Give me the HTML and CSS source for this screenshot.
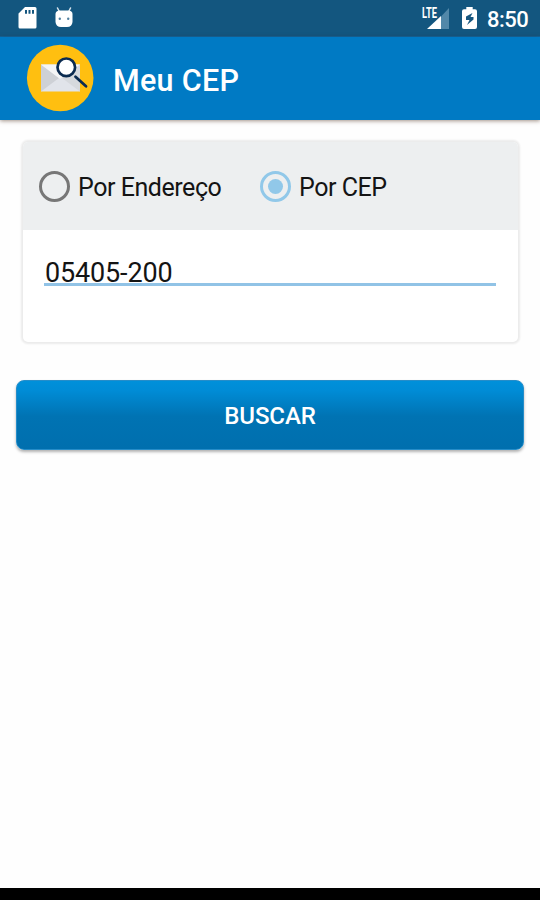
FILE: index.html
```
<!DOCTYPE html>
<html lang="pt-BR">
<head>
<meta charset="utf-8">
<title>Meu CEP</title>
<link rel="stylesheet" href="styles.css">
</head>
<body>
<div class="statusbar">
  <svg class="icon-sd" width="19" height="22" viewBox="0 0 19 22"><path fill="#fff" fill-rule="evenodd" d="M7 0H17Q18.500 0 18.500 1.500V20Q18.500 21.500 17 21.500H2Q.5 21.500 .5 20V6.500ZM7 3V6.800H9V3ZM10.500 3V6.800H12.500V3ZM14 3V6.800H16V3Z"/></svg>
  <svg class="icon-droid" width="18" height="21" viewBox="0 0 18 21"><path d="M2.500 1L4.500 5M15.500 1L13.500 5" stroke="#d9e5ed" stroke-width="1.500" stroke-linecap="round"/><path fill="#fff" d="M4 3.500H14Q17.500 4 17.500 7V15Q17 20 12 20H6Q1 20 .5 15V7Q.5 4 4 3.500Z"/><circle cx="4.800" cy="11.700" r="1.200" fill="#4f7f9f"/><circle cx="13.200" cy="11.700" r="1.200" fill="#4f7f9f"/></svg>
  <span class="grow"></span>
  <svg class="icon-signal" width="29" height="28" viewBox="0 -5 29 28"><path fill="#5288a9" d="M28 1V22H20V9.500Z"/><path fill="#fff" d="M20 9V22H6Z"/><text class="network" x="1" y="10.800" textLength="15" lengthAdjust="spacingAndGlyphs">LTE</text></svg>
  <svg class="icon-battery" width="15" height="22" viewBox="0 0 15 22"><path fill="#fff" d="M4.300 0H10.700V2.300H13Q15 2.300 15 4.300V20Q15 22 13 22H2Q0 22 0 20V4.300Q0 2.300 2 2.300H4.300Z"/><path fill="#16567f" d="M10.500 6L4 9.500V13H7.500L5 18L11.500 12.500V10H8.500Z"/></svg>
  <span class="clock">8:50</span>
</div>
<header class="appbar">
  <svg class="logo" width="68" height="68" viewBox="0 0 68 68"><circle cx="34.200" cy="34" r="33.300" fill="#ffbf10"/><path fill="#e1e4ea" d="M15 20.500H54V47.500H15Z"/><path fill="#ced1d6" d="M15 20.500L33 34L15 47.500Z"/><path fill="#d6d9dd" d="M54 20.500L36 34L54 47.500Z"/><path fill="#f4f5f6" d="M15 20.500H54L34 35Z"/><circle cx="40.300" cy="23.300" r="8.800" fill="#fff" stroke="#0b2b50" stroke-width="2.700"/><path d="M49.500 32.800L60 42.300" stroke="#0b2b50" stroke-width="2.800" stroke-linecap="round"/></svg>
  <h1 class="title">Meu CEP</h1>
</header>
<main class="content">
  <section class="card">
    <div class="options">
      <label class="option option-address"><span class="radio"></span><span class="option-text">Por Endereço</span></label>
      <label class="option"><span class="radio checked"></span><span class="option-text">Por CEP</span></label>
    </div>
    <div class="field"><span class="value">05405-200</span></div>
  </section>
  <button class="search">BUSCAR</button>
</main>
<div class="navbar"></div>
</body>
</html>
```
FILE: styles.css
```
* { box-sizing: border-box; }
body {
  margin: 0;
  width: 540px;
  height: 900px;
  display: flex;
  flex-direction: column;
  overflow: hidden;
  background: #fefefe;
  color: #141414;
  font-family: Roboto, "Liberation Sans", sans-serif;
}
.statusbar {
  height: 37px;
  flex: none;
  display: flex;
  align-items: flex-start;
  padding: 7px 12px 0 18px;
  background: #13567f;
  border-bottom: 1px solid #0f659f;
}
.icon-droid { margin-left: 18px; }
.grow { flex: 1; }
.icon-signal { margin-top: -5px; }
.network {
  fill: #fff;
  font-size: 14px;
  font-weight: 700;
}
.icon-battery { margin-left: 12px; }
.clock {
  width: 41px;
  margin-left: 10px;
  color: #fff;
  font-size: 22px;
  font-weight: 500;
  line-height: 26px;
  letter-spacing: -.5px;
  white-space: nowrap;
}
.appbar {
  height: 83px;
  flex: none;
  display: flex;
  align-items: center;
  padding: 0 0 1px 26px;
  background: #007ac4;
  box-shadow: 0 1px 4px rgba(70, 40, 20, .5);
}
.title {
  margin: 6px 0 0 19px;
  color: #fff;
  font-size: 30.5px;
  font-weight: 500;
  line-height: 36px;
  letter-spacing: .3px;
}
.content {
  flex: 1;
  padding: 22px 16px 0;
}
.card {
  height: 200px;
  margin: 0 6px 0 7px;
  border-radius: 5px;
  background: #fff;
  box-shadow: 0 0 2px 2px #ebebeb;
  overflow: hidden;
}
.options {
  height: 88px;
  display: flex;
  align-items: center;
  padding: 1px 0 0 16px;
  background: #edeff0;
}
.option {
  display: flex;
  align-items: center;
}
.option-address { width: 221px; }
.radio {
  width: 31px;
  height: 31px;
  display: grid;
  place-items: center;
  border: 3px solid #777;
  border-radius: 50%;
}
.checked { border-color: #91c8e9; }
.checked::after {
  content: "";
  width: 15px;
  height: 15px;
  border-radius: 50%;
  background: #91c8e9;
}
.option-text {
  margin: 2px 0 0 8px;
  font-size: 25px;
  line-height: 30px;
  letter-spacing: -.45px;
  white-space: nowrap;
}
.field {
  margin: 26px 22px 0 21px;
  height: 30px;
  border-bottom: 3px solid #91c3e6;
}
.value {
  display: block;
  padding: 1px 0 0 1px;
  font-size: 27px;
  line-height: 32px;
  letter-spacing: -.15px;
}
.search {
  display: block;
  width: 508px;
  height: 70px;
  margin: 38px 0 0;
  padding: 2px 0 0;
  border: 1px solid #268dc9;
  border-radius: 8px;
  background: linear-gradient(#0090da 0%, #008cd6 14%, #0073b3 52%, #006fae 100%);
  box-shadow: 0 2px 3px rgba(0, 0, 0, .3);
  color: #fff;
  font-family: inherit;
  font-size: 24px;
  font-weight: 500;
  letter-spacing: -.1px;
}
.navbar {
  height: 12px;
  flex: none;
  background: #000;
}
```
